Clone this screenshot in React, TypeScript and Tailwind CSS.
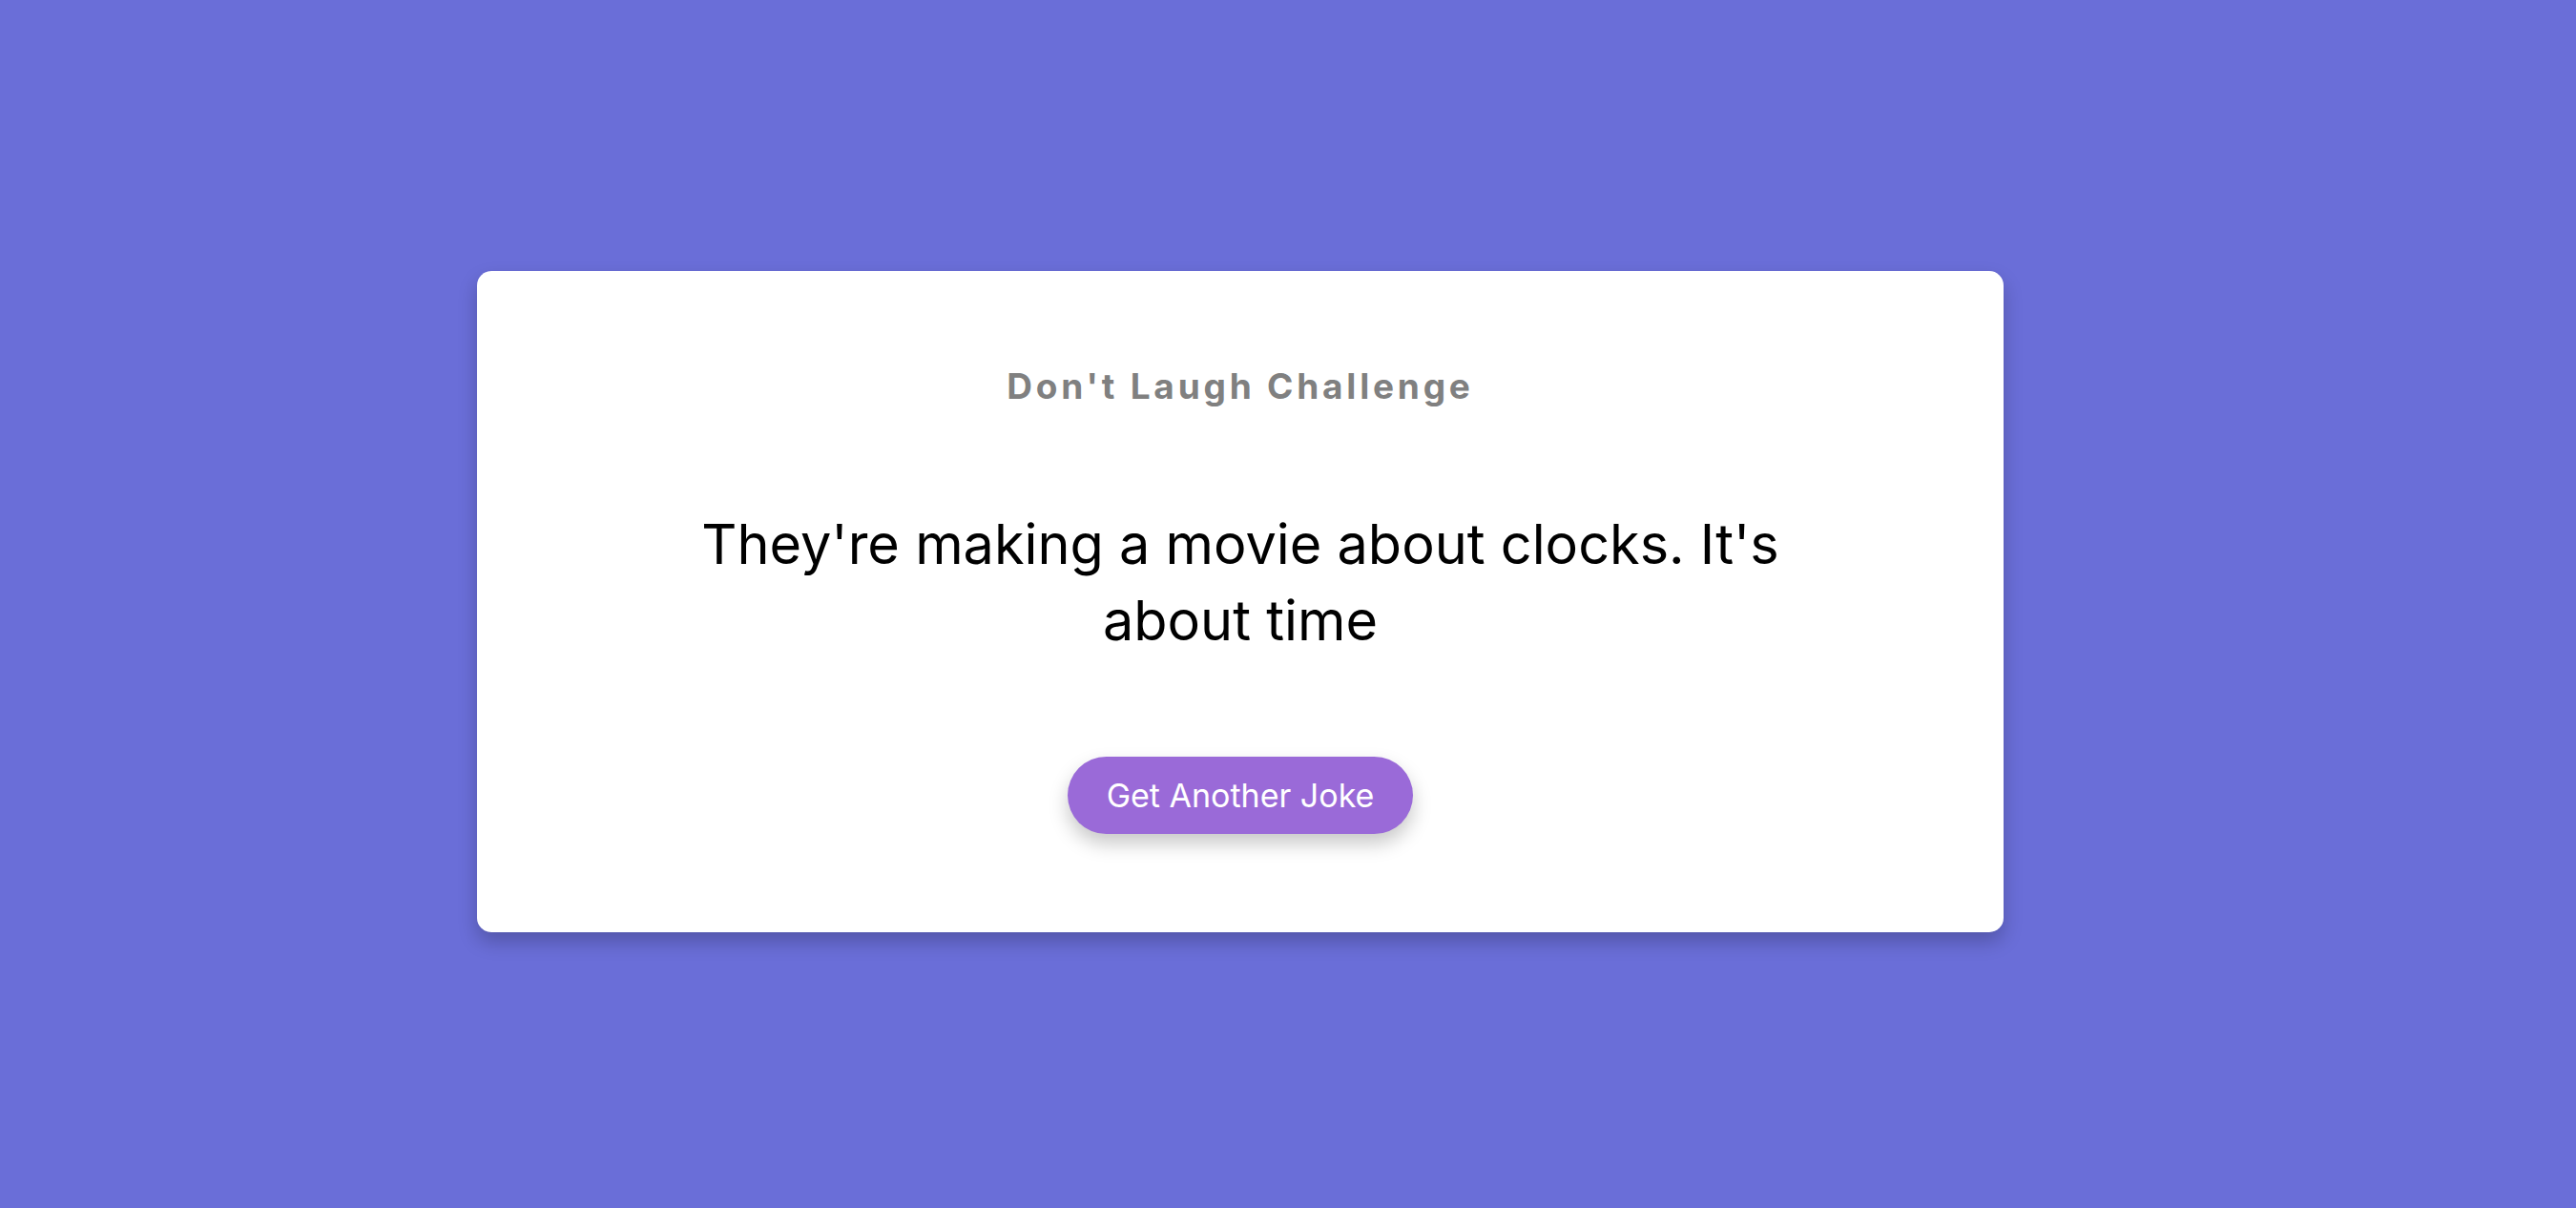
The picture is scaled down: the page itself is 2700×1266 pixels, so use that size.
import React, { useState } from "react";

const jokes = [
    "They're making a movie about clocks. It's about time",
    "Why don't skeletons fight each other? They don't have the guts.",
    "I used to play piano by ear, but now I use my hands.",
];

function App() {
    // current joke index
    const [index, setIndex] = useState(0);

    function nextJoke() {
        setIndex((index + 1) % jokes.length);
    }

    return (
        <div className="flex min-h-screen items-center bg-[#6a6ed8] pb-[6px] font-['Inter',sans-serif]">
            <div className="ml-[500px] flex w-[1600px] flex-col items-center rounded-[15px] bg-white px-[100px] pt-[99px] pb-[103px] shadow-[0_10px_20px_rgba(0,0,0,0.22)]">
                <h3 className="text-[37px] font-bold leading-[44px] tracking-[3.8px] text-[#808080]">
                    Don't Laugh Challenge
                </h3>
                <p className="mt-[103px] max-w-[1200px] text-center text-[57.6px] leading-[80px] text-black">
                    {jokes[index]}
                </p>
                <button
                    onClick={nextJoke}
                    className="mt-[103px] h-[81px] rounded-full bg-[#9a6ad8] px-[41px] text-[34px] text-white shadow-[0_10px_20px_rgba(0,0,0,0.22)]"
                >
                    Get Another Joke
                </button>
            </div>
        </div>
    );
}

export default App;
